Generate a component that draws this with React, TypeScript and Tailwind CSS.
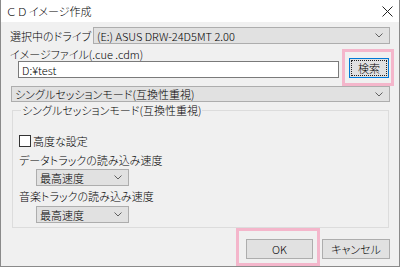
import { ReactNode } from 'react';

const font = "[font-family:'Noto_Sans_CJK_JP','Noto_Sans',sans-serif] [font-feature-settings:'palt'] font-light";

function Chevron() {
    return (
        <svg width="8" height="5" viewBox="0 0 8 5" className="shrink-0">
            <path d="M0.5 0.5 L4 4 L7.5 0.5" fill="none" stroke="#606060" strokeWidth="1" />
        </svg>
    );
}

function Select({ children, className }: { children: ReactNode; className: string }) {
    return (
        <div className={`flex items-center justify-between bg-[#e1e1e1] border border-[#adadad] pl-[3px] pr-[6px] ${className}`}>
            <span className="leading-[14px] whitespace-nowrap">{children}</span>
            <Chevron />
        </div>
    );
}

export default function App() {
    return (
        <div className={`w-[400px] h-[267px] bg-white text-[11px] text-black ${font}`}>
            {/* title bar */}
            <div className="h-[22px] flex items-center justify-between pl-[6px] pr-[6px] border-x border-[#8a8a8a] bg-white">
                <span className="text-[11px] leading-[14px]">
                    <span className="tracking-[2px]">ＣＤ</span>イメージ作成
                </span>
                <svg width="11" height="11" viewBox="0 0 11 11">
                    <path d="M0.5 0.5 L10.5 10.5 M10.5 0.5 L0.5 10.5" stroke="#222" strokeWidth="1" />
                </svg>
            </div>

            <div className="h-[245px] bg-[#f0f0f0] border-x border-b border-[#8a8a8a] pl-[9px] pr-[9px] flex flex-col">
                {/* drive */}
                <div className="mt-[5px] flex items-center h-[17px]">
                    <span className="w-[83px] shrink-0 leading-[14px] whitespace-nowrap">選択中のドライブ</span>
                    <Select className="flex-1 h-[17px]">(E:) ASUS DRW-24D5MT 2.00</Select>
                </div>

                {/* image file */}
                <div className="flex items-end">
                    <div className="flex-1 flex flex-col">
                        <span className="mt-[3px] h-[14px] leading-[14px]">イメージファイル(.cue .cdm)</span>
                        <div className="ml-[8px] h-[17px] bg-white border border-[#7a7a7a] flex items-center pl-[3px]">
                            <span className="leading-[14px]">D:¥test</span>
                        </div>
                    </div>
                    <div className="relative ml-[10px] mr-[1px] w-[40px] h-[20px]">
                        <div className="absolute -left-[7px] -top-[9px] -right-[5px] -bottom-[8px] border-[3px] border-[#f4b6cb]" />
                        <div className="relative w-full h-full bg-[#e1e1e1] border border-[#0078d7] p-[1px]">
                            <div className="w-full h-full border border-dotted border-[#222] flex items-center justify-center leading-[14px]">検索</div>
                        </div>
                    </div>
                </div>

                {/* session mode */}
                <Select className="mt-[8px] ml-[1px] h-[16px]">シングルセッションモード(互換性重視)</Select>

                <fieldset className="mt-[1px] ml-[2px] mr-[1px] border border-[#dcdcdc] pb-[4px] pl-[6px]">
                    <legend className="ml-[2px] px-[1px] h-[14px] leading-[14px]">シングルセッションモード(互換性重視)</legend>
                    <div className="mt-[17px] flex items-center h-[13px]">
                        <div className="w-[12px] h-[12px] border border-[#333] bg-white" />
                        <span className="ml-[2px] leading-[14px]">高度な設定</span>
                    </div>
                    <div className="mt-[6px] h-[14px] leading-[14px]">データトラックの読み込み速度</div>
                    <Select className="mt-[2px] ml-[17px] w-[93px] h-[17px]">最高速度</Select>
                    <div className="mt-[3px] h-[14px] leading-[14px]">音楽トラックの読み込み速度</div>
                    <Select className="mt-[3px] ml-[17px] w-[93px] h-[17px]">最高速度</Select>
                </fieldset>

                {/* buttons */}
                <div className="mt-[11px] flex justify-end gap-[9px]">
                    <div className="relative w-[67px] h-[20px]">
                        <div className="absolute -left-[10px] -top-[11px] -right-[7px] -bottom-[7px] border-[3px] border-[#f4b6cb]" />
                        <div className="relative w-full h-full bg-[#e1e1e1] border border-[#adadad] flex items-center justify-center leading-[14px]">OK</div>
                    </div>
                    <div className="w-[68px] h-[20px] bg-[#e1e1e1] border border-[#adadad] flex items-center justify-center leading-[14px]">キャンセル</div>
                </div>
            </div>
        </div>
    );
}
